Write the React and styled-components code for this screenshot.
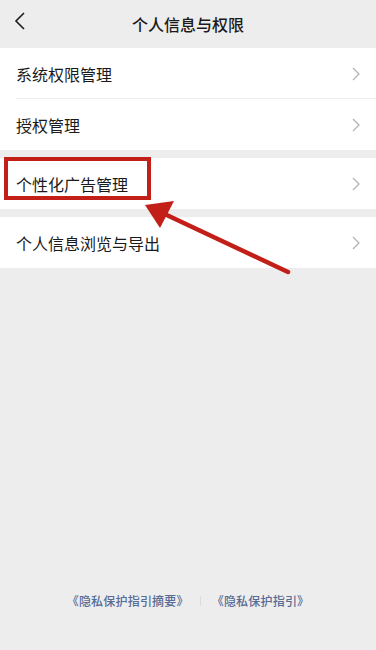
import styled, { createGlobalStyle } from 'styled-components';

const GlobalStyle = createGlobalStyle`
  html, body {
    margin: 0;
    padding: 0;
    background: #ededed;
  }
  * {
    box-sizing: border-box;
  }
`;

function Chevron() {
  return (
    <svg width="8" height="14" viewBox="0 0 8 14">
      <path d="M1 1l6 6-6 6" fill="none" stroke="#b3b3b3" strokeWidth="1.3" />
    </svg>
  );
}

function Row({ label, divider, highlight }) {
  return (
    <Item $divider={divider}>
      <Label>{label}</Label>
      <Chevron />
      {highlight && <Highlight />}
    </Item>
  );
}

function App() {
  return (
    <Page>
      <GlobalStyle />
      <Header>
        <Back>
          <svg width="12" height="20" viewBox="0 0 12 20">
            <path d="M10 2L2 10l8 8" fill="none" stroke="#1a1a1a" strokeWidth="1.6" />
          </svg>
        </Back>
        <Title>个人信息与权限</Title>
      </Header>

      <Group>
        <Row label="系统权限管理" divider />
        <Row label="授权管理" />
      </Group>
      <Group>
        <Row label="个性化广告管理" highlight />
      </Group>
      <Group>
        <Row label="个人信息浏览与导出" />
      </Group>

      <Arrow width="376" height="650" viewBox="0 0 376 650">
        <line x1="288" y1="272" x2="156" y2="210" stroke="#c21f18" strokeWidth="4.5" strokeLinecap="round" />
        <polygon points="145,205 174,201 160,228" fill="#c21f18" />
      </Arrow>

      <Footer>
        <Link>《隐私保护指引摘要》</Link>
        <Sep />
        <Link>《隐私保护指引》</Link>
      </Footer>
    </Page>
  );
}

export default App;

const Page = styled.div`
  position: relative;
  min-height: 650px;
  display: flex;
  flex-direction: column;
  font-family: "Noto Sans CJK SC", "Noto Sans", sans-serif;
  background: #ededed;
`;

const Header = styled.div`
  height: 48px;
  display: flex;
  align-items: center;
  justify-content: center;
  position: relative;
`;

const Back = styled.div`
  position: absolute;
  left: 14px;
  top: 11px;
  display: flex;
`;

const Title = styled.div`
  font-size: 16px;
  font-weight: 500;
  color: #1a1a1a;
`;

const Group = styled.div`
  background: #fff;
  margin-bottom: 8px;
`;

const Item = styled.div`
  position: relative;
  height: 51px;
  display: flex;
  align-items: center;
  justify-content: space-between;
  padding: 0 16px;
  &::after {
    content: '';
    display: ${(p) => (p.$divider ? 'block' : 'none')};
    position: absolute;
    left: 16px;
    right: 0;
    bottom: 0;
    height: 1px;
    background: #ededed;
  }
`;

const Label = styled.span`
  font-size: 16px;
  color: #1a1a1a;
`;

const Highlight = styled.div`
  position: absolute;
  left: 4px;
  top: -1px;
  width: 147px;
  height: 43px;
  border: 4px solid #c21f18;
`;

const Arrow = styled.svg`
  position: absolute;
  left: 0;
  top: 0;
  pointer-events: none;
`;

const Footer = styled.div`
  margin-top: auto;
  padding-bottom: 41px;
  display: flex;
  justify-content: center;
  align-items: center;
  gap: 11px;
`;

const Link = styled.span`
  font-size: 12px;
  font-weight: 500;
  color: #576b95;
  letter-spacing: 0.2px;
`;

const Sep = styled.span`
  width: 1px;
  height: 10px;
  background: #dcdcdc;
`;
